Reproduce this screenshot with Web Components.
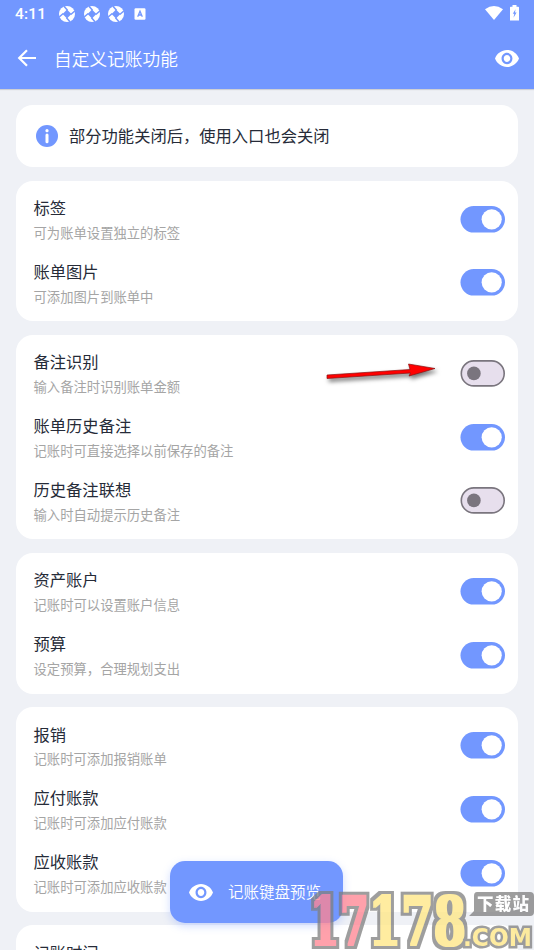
<!DOCTYPE html>
<html lang="zh-CN"><head><meta charset="utf-8"><title>自定义记账功能</title>
<style>
html,body{margin:0;height:950px;overflow:hidden;background:#eff1f6}
body{font-family:"Noto Sans CJK SC",sans-serif;color:#262b38}
</style></head><body>
<settings-page></settings-page>
<script>
const define=(name,html)=>customElements.define(name,class extends HTMLElement{
  connectedCallback(){
    if(this.shadowRoot)return;
    const t=document.createElement('template');
    t.innerHTML=html;
    this.attachShadow({mode:'open'}).append(t.content.cloneNode(true));
  }
});

define('eye-icon',`<style>:host{display:block;width:24px;height:17px}svg{display:block}</style>
<svg width="24" height="17" viewBox="1 4.5 22 15" preserveAspectRatio="none" fill="#fff"><path d="M12 4.5C7 4.5 2.73 7.61 1 12c1.73 4.39 6 7.5 11 7.5s9.27-3.11 11-7.5c-1.73-4.39-6-7.5-11-7.5zM12 17c-2.76 0-5-2.24-5-5s2.24-5 5-5 5 2.24 5 5-2.24 5-5 5zm0-8c-1.66 0-3 1.34-3 3s1.34 3 3 3 3-1.34 3-3-1.34-3-3-3z"/></svg>`);

define('aperture-icon',`<style>:host{display:block;width:16px;height:16px}svg{display:block}</style>
<svg width="16" height="16" viewBox="0 0 16 16"><circle cx="8" cy="8" r="8" fill="#fff"/><path d="M8 3.600 12.400 8 8 12.400 3.600 8Z" fill="#7297ff"/><path d="M8.500 4.200 5 .2M11.800 8.500 15.800 5M7.500 11.800 11 15.800M4.200 7.500.2 11" fill="none" stroke="#7297ff" stroke-width="1.500"/></svg>`);

define('status-bar',`<style>:host{display:flex;height:27px;align-items:center;padding:0 15px;box-sizing:border-box;color:#fff}
.time{font:500 15.5px/20px Roboto,sans-serif;width:44px;letter-spacing:.2px}.apps{display:flex;gap:8.5px;align-items:center;flex:1}
.a{margin-left:1.5px}.sys{display:flex;gap:7px;align-items:center;margin-top:-1px}svg{display:block}</style>
<div class="time">4:11</div><div class="apps"><aperture-icon></aperture-icon><aperture-icon></aperture-icon><aperture-icon></aperture-icon>
<svg class="a" width="12" height="12" viewBox="0 0 12 12"><rect x=".5" y=".3" width="11" height="11.500" rx="1.200" fill="#fff"/><path d="M3.700 8.800 6 3.200l2.300 5.600M4.500 7h3" fill="none" stroke="#7297ff" stroke-width="1.300"/></svg></div>
<div class="sys"><svg width="18" height="14" viewBox="0 0 18 14"><path d="M0 3.200Q9-3.200 18 3.200L9 14Z" fill="#fff"/></svg><svg width="9" height="16" viewBox="0 0 9 16"><path d="M2.500 0h4v1.700h1.700q.8 0 .8.8V15.500H0V2.500q0-.8.8-.8h1.700Z" fill="#fff"/><path d="M5.500 4.200 2.800 8.800h1.500L3.500 12.800 6.600 7.600H5Z" fill="#7297ff"/></svg></div>`);

define('app-bar',`<style>:host{display:block;height:89px;background:#7297ff;color:#fff;box-shadow:0 1px 1px #0002}
nav{height:62px;display:flex;align-items:center;padding:0 15px 0 17px}svg{display:block;margin-right:17px}
.title{font-size:17.7px;line-height:26px;flex:1;font-weight:350}</style>
<status-bar></status-bar><nav><svg width="20" height="18" viewBox="0 0 20 18"><path d="M10 1.200 2.200 9 10 16.800M2 9h17" fill="none" stroke="#fff" stroke-width="2.200"/></svg><div class="title">自定义记账功能</div><eye-icon></eye-icon></nav>`);

define('toggle-switch',`<style>:host{display:block;box-sizing:border-box;width:45px;height:27px}svg{display:block;width:100%;height:100%}
.off{display:none}:host([off]) .off{display:block}:host([off]) .on{display:none}</style>
<svg class="on" viewBox="0 0 45 27"><rect x=".5" width="44.500" height="26.600" rx="13.300" fill="#7297ff"/><circle cx="31.700" cy="13.300" r="10.100" fill="#fff"/></svg>
<svg class="off" viewBox="0 0 45 27"><rect x="1.300" y=".9" width="42.900" height="25" rx="12.500" fill="#e7dfed" stroke="#7a757e" stroke-width="1.600"/><circle cx="13.900" cy="13.400" r="6.800" fill="#7a757e"/></svg>`);

define('setting-row',`<style>:host{display:flex;height:63.860px;justify-content:space-between;padding:0 13px 0 17.500px}
.t{padding-top:8.500px}.n{font-size:16.300px;line-height:24px}.d{font-size:13.330px;line-height:20px;color:#a5a5a5;margin-top:3.900px}</style><div class="t"><div class="n"><slot name="name"></slot></div><div class="d"><slot></slot></div></div><slot name="control"></slot>`);

define('settings-card',`<style>:host{display:block;background:#fff;border-radius:17px;padding:6px 0 7px}</style><slot></slot>`);

define('info-banner',`<style>:host{display:flex;align-items:center;gap:11.500px;height:62px;border-radius:17px;background:#fff;padding-left:19.500px;font-size:16.300px}svg{display:block}span{margin-top:-2px}</style>
<svg width="22" height="22" viewBox="0 0 22 22"><circle cx="11" cy="11" r="11" fill="#7297ff"/><circle cx="11" cy="5.700" r="1.600" fill="#fff"/><path d="M11 10v6.700" stroke="#fff" stroke-width="3" stroke-linecap="round"/></svg><span><slot></slot></span>`);

define('preview-button',`<style>:host{position:absolute;left:170px;top:861px;width:173px;height:62px;box-sizing:border-box;border-radius:15px;background:#7297ff;color:#fff;display:flex;align-items:center;gap:15px;padding-left:19px;font-size:15.500px;font-weight:350;box-shadow:0 3px 8px #7297ff55}span{margin-top:-2px}</style><eye-icon></eye-icon><span><slot></slot></span>`);

define('red-arrow',`<style>:host{position:absolute;left:322px;top:358px}svg{display:block;filter:drop-shadow(2px 3px 2px #0008)}</style>
<svg width="125" height="34" viewBox="0 0 125 34"><path d="M5 17 88 11.500 86.500 6 113 10.500 87 18 88.500 15 5 20.500Z" fill="#f00" stroke="#811" stroke-width=".7"/></svg>`);

define('site-mark',`<style>:host{position:absolute;left:305px;top:885px;width:229px;height:65px;opacity:.76}svg{display:block}
.big{font:700 64px "DejaVu Serif",serif}.com{font:700 24px "DejaVu Sans",sans-serif;paint-order:stroke;stroke:#808080;stroke-width:5px;stroke-linejoin:miter}.cn{font:900 16.500px "Noto Sans CJK SC",sans-serif}</style>
<svg width="229" height="65" viewBox="0 0 229 65">
<filter id="slab" filterUnits="userSpaceOnUse" x="0" y="0" width="229" height="65" color-interpolation-filters="sRGB"><feMorphology in="SourceGraphic" operator="dilate" radius="1" result="face"/><feMorphology in="SourceAlpha" operator="dilate" radius="4" result="edge"/><feFlood flood-color="#808080"/><feComposite in2="edge" operator="in" result="rim"/><feMerge><feMergeNode in="rim"/><feMergeNode in="face"/></feMerge></filter>
<g filter="url(#slab)"><text class="big" transform="translate(5 60) scale(.66 1.040)" fill="#ff8491">17</text><text class="big" transform="translate(63.500 60) scale(.73 1.040)" fill="#ffe783">178</text></g>
<path d="M172 7h53q4 0 4 4v16q0 4-4 4h-61l5-5V11q0-4 3-4Z" fill="#808080"/><text class="cn" x="172" y="25" fill="#fff" textLength="52">下载站</text><text class="com" transform="translate(158 61) scale(.97 1)" fill="#ffe783">.COM</text></svg>`);

const groups=[
 [['标签','可为账单设置独立的标签',1],['账单图片','可添加图片到账单中',1]],
 [['备注识别','输入备注时识别账单金额',0],['账单历史备注','记账时可直接选择以前保存的备注',1],['历史备注联想','输入时自动提示历史备注',0]],
 [['资产账户','记账时可以设置账户信息',1],['预算','设定预算，合理规划支出',1]],
 [['报销','记账时可添加报销账单',1],['应付账款','记账时可添加应付账款',1],['应收账款','记账时可添加应收账款',1]],
 [['记账时间','',1]]
];
define('settings-page',`<style>:host{display:block;position:relative;height:950px;overflow:hidden}
main{padding:16px 16px 0;display:flex;flex-direction:column;gap:13.500px}main>*{flex:none}toggle-switch{margin-top:19px}</style>
<app-bar></app-bar><main><info-banner>部分功能关闭后，使用入口也会关闭</info-banner>${groups.map(g=>`<settings-card>${g.map(([n,d,on])=>`<setting-row><span slot="name">${n}</span>${d}<toggle-switch slot="control" ${on?'':'off'}></toggle-switch></setting-row>`).join('')}</settings-card>`).join('')}</main>
<red-arrow></red-arrow><preview-button>记账键盘预览</preview-button><site-mark></site-mark>`);
</script></body></html>
